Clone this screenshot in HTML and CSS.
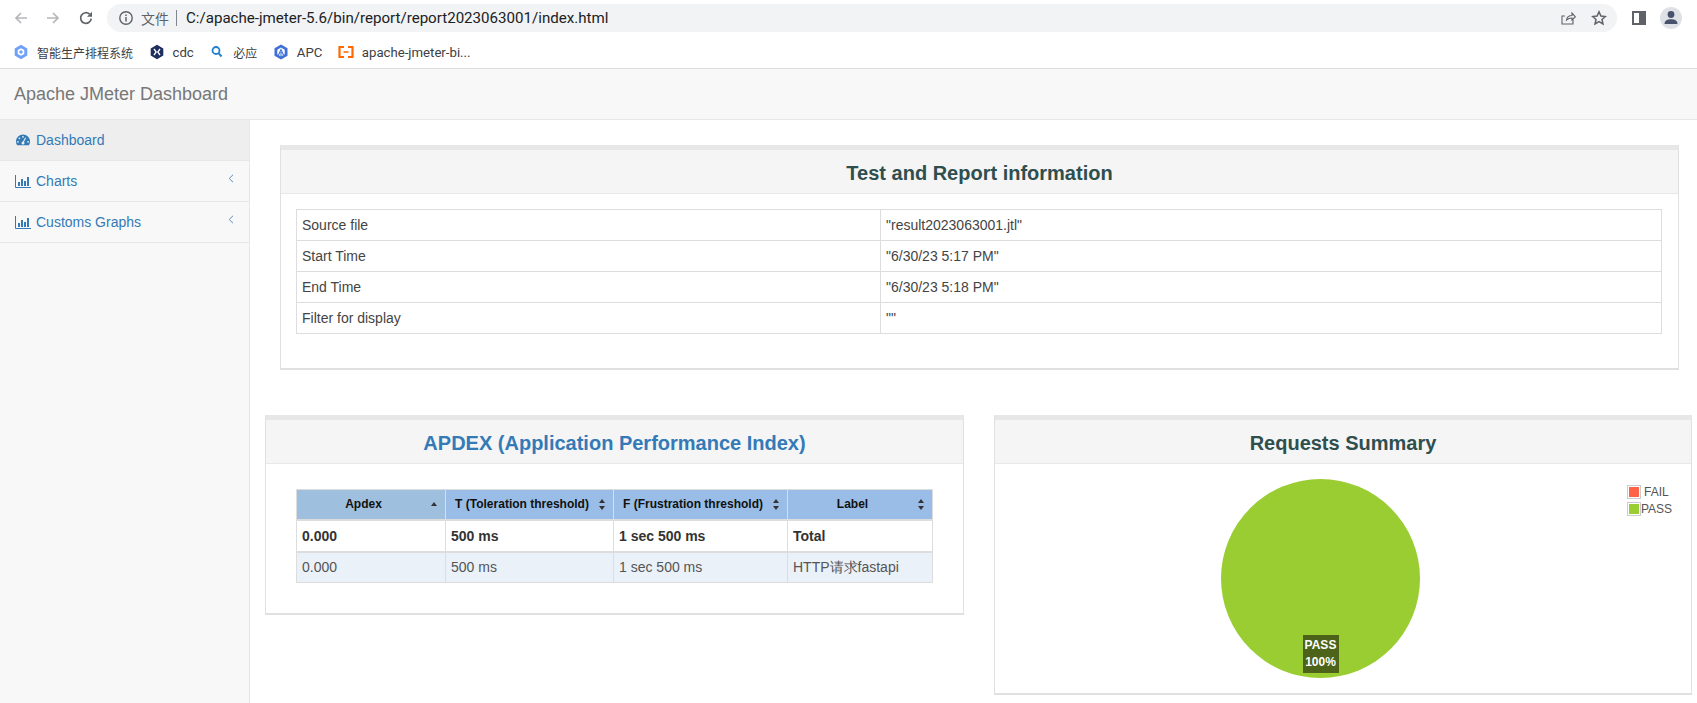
FILE: index.html
```html
<!DOCTYPE html>
<html lang="en">
<head>
  <meta charset="UTF-8" />
  <title>Apache JMeter Dashboard</title>
  <link rel="stylesheet" href="styles.css">
</head>
<body>
  <div class="toolbar">
    <svg class="nav-icon back" viewBox="0 0 16 16"><path d="M14 8H3M8 3L3 8l5 5" fill="none" stroke="#b4b6b9" stroke-width="1.7"/></svg>
    <svg class="nav-icon" viewBox="0 0 16 16"><path d="M2 8h11M8 3l5 5-5 5" fill="none" stroke="#b4b6b9" stroke-width="1.7"/></svg>
    <svg class="nav-icon" viewBox="0 0 16 16"><path d="M13.2 8.6A5.3 5.3 0 1 1 11.6 4.2" fill="none" stroke="#5f6368" stroke-width="1.7"/><path d="M14 1.8v5h-5z" fill="#5f6368"/></svg>
    <div class="address">
      <svg class="info-icon" viewBox="0 0 16 16"><circle cx="8" cy="8" r="6.2" fill="none" stroke="#5f6368" stroke-width="1.4"/><path d="M8 7v4.4M8 4.4v1.5" stroke="#5f6368" stroke-width="1.5"/></svg>
      <span class="scheme">文件</span>
      <span class="sep"></span>
      <span class="url">C:/apache-jmeter-5.6/bin/report/report2023063001/index.html</span>
      <svg class="addr-icon share" viewBox="0 0 16 16"><path d="M13 9v5H2V6h3M6.5 10c.4-3 2.600-4.500 5.500-4.500V3l3.300 3.800L12 10V8c-2.300 0-4 .5-5.500 2z" fill="none" stroke="#5f6368" stroke-width="1.100"/></svg>
      <svg class="addr-icon star" viewBox="0 0 16 16"><path d="M8 1.800l1.900 4.200 4.500.5-3.400 3 1 4.500L8 11.700 4 14l1-4.500-3.400-3 4.500-.5z" fill="none" stroke="#5f6368" stroke-width="1.500"/></svg>
    </div>
    <div class="side-panel"><span></span></div>
    <div class="avatar">
      <svg viewBox="0 0 22 22"><circle cx="11" cy="7.500" r="3.400" fill="#47536b"/><path d="M4.500 17c0-3.400 3-4.800 6.500-4.800s6.500 1.400 6.500 4.800z" fill="#47536b"/></svg>
    </div>
  </div>

  <div class="bookmarks">
    <div class="mark">
      <svg viewBox="0 0 16 16"><path d="M8 .8l6.300 3.600v7.200L8 15.200 1.700 11.600V4.400z" fill="#6ea1f7"/><path d="M8 4.200l3.300 1.900v3.800L8 11.800 4.700 9.900V6.100z" fill="#fff"/><circle cx="8" cy="8" r="1.700" fill="#6ea1f7"/></svg>
      <span>智能生产排程系统</span>
    </div>
    <div class="mark">
      <svg viewBox="0 0 16 16"><path d="M8 .8l6.300 3.600v7.200L8 15.200 1.700 11.600V4.400z" fill="#1e2f5f"/><path d="M5 5l2.200 3L5 11M11 5L8.800 8l2.200 3" fill="none" stroke="#fff" stroke-width="1.300"/></svg>
      <span class="mark-latin">cdc</span>
    </div>
    <div class="mark">
      <svg viewBox="0 0 16 16"><circle cx="7" cy="6.500" r="3.500" fill="none" stroke="#1f7fd0" stroke-width="1.800"/><path d="M9.500 9.200l3 3.300" stroke="#1f7fd0" stroke-width="2"/></svg>
      <span>必应</span>
    </div>
    <div class="mark">
      <svg viewBox="0 0 16 16"><path d="M8 .5l6.500 3.700v7.600L8 15.500 1.500 11.800V4.200z" fill="#3f6fd8"/><path d="M8 3.500l3.700 2.200v4.600L8 12.500 4.300 10.300V5.700z" fill="#fff"/><path d="M5.500 11L8 5.500l2.500 5.500M8 8v5" fill="none" stroke="#3f6fd8" stroke-width="1.100"/></svg>
      <span class="mark-latin">APC</span>
    </div>
    <div class="mark">
      <svg viewBox="0 0 16 16"><path d="M6 3H1.500v10H6M10 3h4.500v10H10" fill="none" stroke="#ff6a00" stroke-width="2.200"/><path d="M5.500 8h5" stroke="#ff6a00" stroke-width="1.600"/></svg>
      <span class="mark-latin">apache-jmeter-bi...</span>
    </div>
  </div>

  <div class="navbar">Apache JMeter Dashboard</div>

  <div class="wrapper">
    <nav class="sidebar">
      <a class="side-item active" href="#">
        <svg class="side-icon" viewBox="0 0 16 16"><path d="M8 2.500a7 7 0 0 0-7 7c0 1.400.4 2.700 1.100 3.800h11.800A7 7 0 0 0 15 9.500a7 7 0 0 0-7-7z" fill="#337ab7"/><circle cx="8" cy="4.800" r=".9" fill="#eee"/><circle cx="4.400" cy="6.300" r=".9" fill="#eee"/><circle cx="3" cy="9.800" r=".9" fill="#eee"/><circle cx="13" cy="9.800" r=".9" fill="#eee"/><path d="M10.600 5.800L8.300 10" stroke="#eee" stroke-width="1.100"/><circle cx="8" cy="11" r="1.500" fill="#eee"/></svg>
        Dashboard
      </a>
      <a class="side-item" href="#">
        <svg class="side-icon" viewBox="0 0 16 16"><path d="M.5 2v12.500H16" fill="none" stroke="#337ab7"/><path d="M3 9h2v4H3zM6 6h2v7H6zM9 8h2v5H9zM12 4h2v9h-2z" fill="#337ab7"/></svg>
        Charts
        <svg class="angle" viewBox="0 0 6 9"><path d="M5 .8L1.200 4.500 5 8.200" fill="none" stroke="#5b8fc4" stroke-width="1"/></svg>
      </a>
      <a class="side-item" href="#">
        <svg class="side-icon" viewBox="0 0 16 16"><path d="M.5 2v12.500H16" fill="none" stroke="#337ab7"/><path d="M3 9h2v4H3zM6 6h2v7H6zM9 8h2v5H9zM12 4h2v9h-2z" fill="#337ab7"/></svg>
        Customs Graphs
        <svg class="angle" viewBox="0 0 6 9"><path d="M5 .8L1.200 4.500 5 8.200" fill="none" stroke="#5b8fc4" stroke-width="1"/></svg>
      </a>
    </nav>

    <main class="content">
      <section class="panel info-panel">
        <h2 class="panel-title">Test and Report information</h2>
        <div class="info-body">
          <table class="info-table">
            <tr><td class="info-key">Source file</td><td>"result2023063001.jtl"</td></tr>
            <tr><td class="info-key">Start Time</td><td>"6/30/23 5:17 PM"</td></tr>
            <tr><td class="info-key">End Time</td><td>"6/30/23 5:18 PM"</td></tr>
            <tr><td class="info-key">Filter for display</td><td>""</td></tr>
          </table>
        </div>
      </section>

      <div class="panel-row">
        <section class="panel apdex-panel">
          <h2 class="panel-title blue">APDEX (Application Performance Index)</h2>
          <div class="apdex-body">
            <table class="apdex-table">
              <thead>
                <tr>
                  <th class="col-a sorted">Apdex<span class="sort up"></span></th>
                  <th class="col-t">T (Toleration threshold)<span class="sort"></span></th>
                  <th class="col-f">F (Frustration threshold)<span class="sort"></span></th>
                  <th class="col-l">Label<span class="sort"></span></th>
                </tr>
              </thead>
              <tbody>
                <tr class="total"><td>0.000</td><td>500 ms</td><td>1 sec 500 ms</td><td>Total</td></tr>
                <tr class="odd"><td>0.000</td><td>500 ms</td><td>1 sec 500 ms</td><td>HTTP请求fastapi</td></tr>
              </tbody>
            </table>
          </div>
        </section>

        <section class="panel summary-panel">
          <h2 class="panel-title">Requests Summary</h2>
          <div class="chart">
            <div class="pie">
              <div class="pie-label">PASS<br>100%</div>
            </div>
            <div class="legend">
              <div class="legend-row"><span class="swatch"><i class="fail"></i></span><span class="legend-fail">FAIL</span></div>
              <div class="legend-row"><span class="swatch"><i class="pass"></i></span><span>PASS</span></div>
            </div>
          </div>
        </section>
      </div>
    </main>
  </div>
</body>
</html>
```

FILE: styles.css
```css
* {
  box-sizing: border-box;
}
html, body {
  height: 100%;
}
body {
  margin: 0;
  font-family: "Liberation Sans", Arial, sans-serif;
  font-size: 14px;
  color: #333;
  background: #fff;
  overflow: hidden;
  display: flex;
  flex-direction: column;
}

/* browser chrome */
.toolbar {
  height: 36px;
  display: flex;
  align-items: center;
  padding: 0 0 0 13px;
  flex: none;
}
.nav-icon {
  width: 16px;
  height: 16px;
  margin-right: 17px;
  flex: none;
}
.nav-icon.back {
  margin-right: 16px;
}
.address {
  width: 1510px;
  height: 28px;
  margin-left: -4px;
  padding: 0 0 0 11px;
  background: #f1f3f4;
  border-radius: 14px;
  display: flex;
  align-items: center;
  font-family: Roboto, "Noto Sans CJK SC", sans-serif;
  font-size: 14px;
  flex: none;
}
.info-icon {
  width: 16px;
  height: 16px;
  flex: none;
}
.scheme {
  margin-left: 7px;
  color: #5f6368;
  font-family: "Noto Sans CJK SC", sans-serif;
}
.sep {
  width: 1px;
  height: 16px;
  margin: 0 9px 0 7px;
  background: #80868b;
}
.url {
  color: #202124;
  font-size: 15.1px;
  flex: 1;
}
.addr-icon {
  width: 16px;
  height: 16px;
  flex: none;
}
.share {
  margin-right: 15px;
}
.star {
  margin-right: 10px;
}
.side-panel {
  width: 14px;
  height: 14px;
  margin-left: 15px;
  background: #5f6368;
  padding: 2px 7px 2px 2px;
  flex: none;
}
.side-panel span {
  display: block;
  width: 100%;
  height: 100%;
  background: #fff;
}
.avatar {
  width: 22px;
  height: 22px;
  margin-left: 14px;
  border-radius: 50%;
  background: #dee1e6;
  flex: none;
}
.avatar svg {
  display: block;
  width: 22px;
  height: 22px;
}

.bookmarks {
  height: 33px;
  display: flex;
  align-items: center;
  padding-left: 13px;
  font-family: Roboto, "Noto Sans CJK SC", sans-serif;
  font-size: 12px;
  color: #3c4043;
  border-bottom: 1px solid #dadce0;
  flex: none;
}
.mark {
  display: flex;
  align-items: center;
  gap: 8px;
  margin-right: 15.500px;
}
.mark svg {
  width: 16px;
  height: 16px;
  flex: none;
}
.mark-latin {
  font-size: 13.200px;
}

/* page */
.navbar {
  height: 51px;
  padding-left: 14px;
  line-height: 50px;
  font-size: 18px;
  color: #777;
  background: #f8f8f8;
  border-bottom: 1px solid #e7e7e7;
  flex: none;
}
.wrapper {
  flex: 1;
  display: flex;
  min-height: 0;
}
.sidebar {
  width: 250px;
  background: #f8f8f8;
  border-right: 1px solid #e7e7e7;
  flex: none;
}
.side-item {
  height: 41px;
  display: flex;
  align-items: center;
  padding-left: 15px;
  color: #337ab7;
  text-decoration: none;
  border-bottom: 1px solid #e7e7e7;
}
.side-item.active {
  background: #eee;
}
.side-icon {
  width: 16px;
  height: 16px;
  margin-right: 5px;
  flex: none;
}
.angle {
  width: 6px;
  height: 9px;
  margin-left: auto;
  margin-right: 15px;
  margin-top: -6px;
}
.content {
  flex: 1;
  padding: 25px 4px 0 15px;
  min-width: 0;
}
.panel {
  background: #fff;
  border: 1px solid #e0e0e0;
  border-top: 5px solid #e7e7e7;
  border-bottom-width: 2px;
}
.panel-title {
  margin: 0;
  height: 44px;
  padding-top: 4px;
  line-height: 39px;
  text-align: center;
  font-size: 20px;
  font-weight: bold;
  color: #2f4f4f;
  background: #f5f5f5;
  border-bottom: 1px solid #e8e8e8;
}
.panel-title.blue {
  color: #337ab7;
}
.info-panel {
  margin: 0 14px 0 15px;
  height: 225px;
}
.info-body {
  padding: 15px 16px 0 15px;
}
.info-table {
  width: 100%;
  border-collapse: collapse;
}
.info-table td {
  height: 31px;
  padding: 0 5px;
  border: 1px solid #ddd;
  color: #444;
}
.info-key {
  width: 584px;
}

.panel-row {
  margin-top: 45px;
  display: grid;
  grid-template-columns: 699px 698px;
  column-gap: 30px;
  align-items: start;
}
.apdex-panel {
  height: 200px;
}
.apdex-body {
  padding: 25px 29px 0 30px;
}
.apdex-table {
  width: 636px;
  table-layout: fixed;
  border-collapse: collapse;
  font-size: 14px;
}
.apdex-table th {
  position: relative;
  height: 30px;
  padding: 0 20px 0 5px;
  font-size: 12px;
  color: #111;
  background: #99bde6;
  border: 1px solid #ddd;
  border-bottom-width: 2px;
}
.apdex-table th.sorted {
  background: #9fbfdf;
}
.apdex-table td {
  height: 31px;
  padding: 0 5px;
  line-height: 18px;
  border: 1px solid #ddd;
  color: #555;
}
.apdex-table .total td {
  height: 32px;
  font-weight: bold;
  color: #333;
  border-bottom-width: 2px;
}
.apdex-table .odd td {
  background: #eaf1f9;
}
.col-a {
  width: 149px;
}
.col-t {
  width: 168px;
}
.col-f {
  width: 174px;
}
.col-l {
  width: 145px;
}
.sort {
  position: absolute;
  right: 7px;
  top: 50%;
  width: 7px;
  height: 11px;
  margin-top: -5px;
}
.sort::before,
.sort::after {
  content: "";
  position: absolute;
  left: 0;
  border-left: 3.500px solid transparent;
  border-right: 3.500px solid transparent;
}
.sort::before {
  top: 0;
  border-bottom: 4.500px solid #333;
}
.sort::after {
  bottom: 0;
  border-top: 4.500px solid #333;
}
.sort.up::after {
  display: none;
}
.sort.up::before {
  top: 3px;
}

.summary-panel {
  height: 280px;
}
.chart {
  position: relative;
  height: 230px;
  display: flex;
  justify-content: center;
  padding: 15px 0 0 0;
}
.pie {
  position: relative;
  width: 199px;
  height: 199px;
  margin-right: 46px;
  border-radius: 50%;
  background: #9acd32;
}
.pie-label {
  position: absolute;
  left: 82px;
  bottom: 5px;
  width: 36px;
  padding: 2px 0 2px;
  background: #4d6319;
  color: #fff;
  font-size: 12px;
  font-weight: bold;
  line-height: 17px;
  text-align: center;
}
.legend {
  position: absolute;
  left: 632px;
  top: 19px;
  font-size: 12px;
  color: #545454;
}
.legend-row {
  display: flex;
  align-items: center;
  height: 17px;
}
.swatch {
  width: 14px;
  height: 14px;
  padding: 1px;
  border: 1px solid #ccc;
  flex: none;
}
.swatch i {
  display: block;
  width: 100%;
  height: 100%;
}
.swatch .fail {
  background: #ff6347;
}
.swatch .pass {
  background: #9acd32;
}
.legend-fail {
  margin-left: 3px;
}
```
